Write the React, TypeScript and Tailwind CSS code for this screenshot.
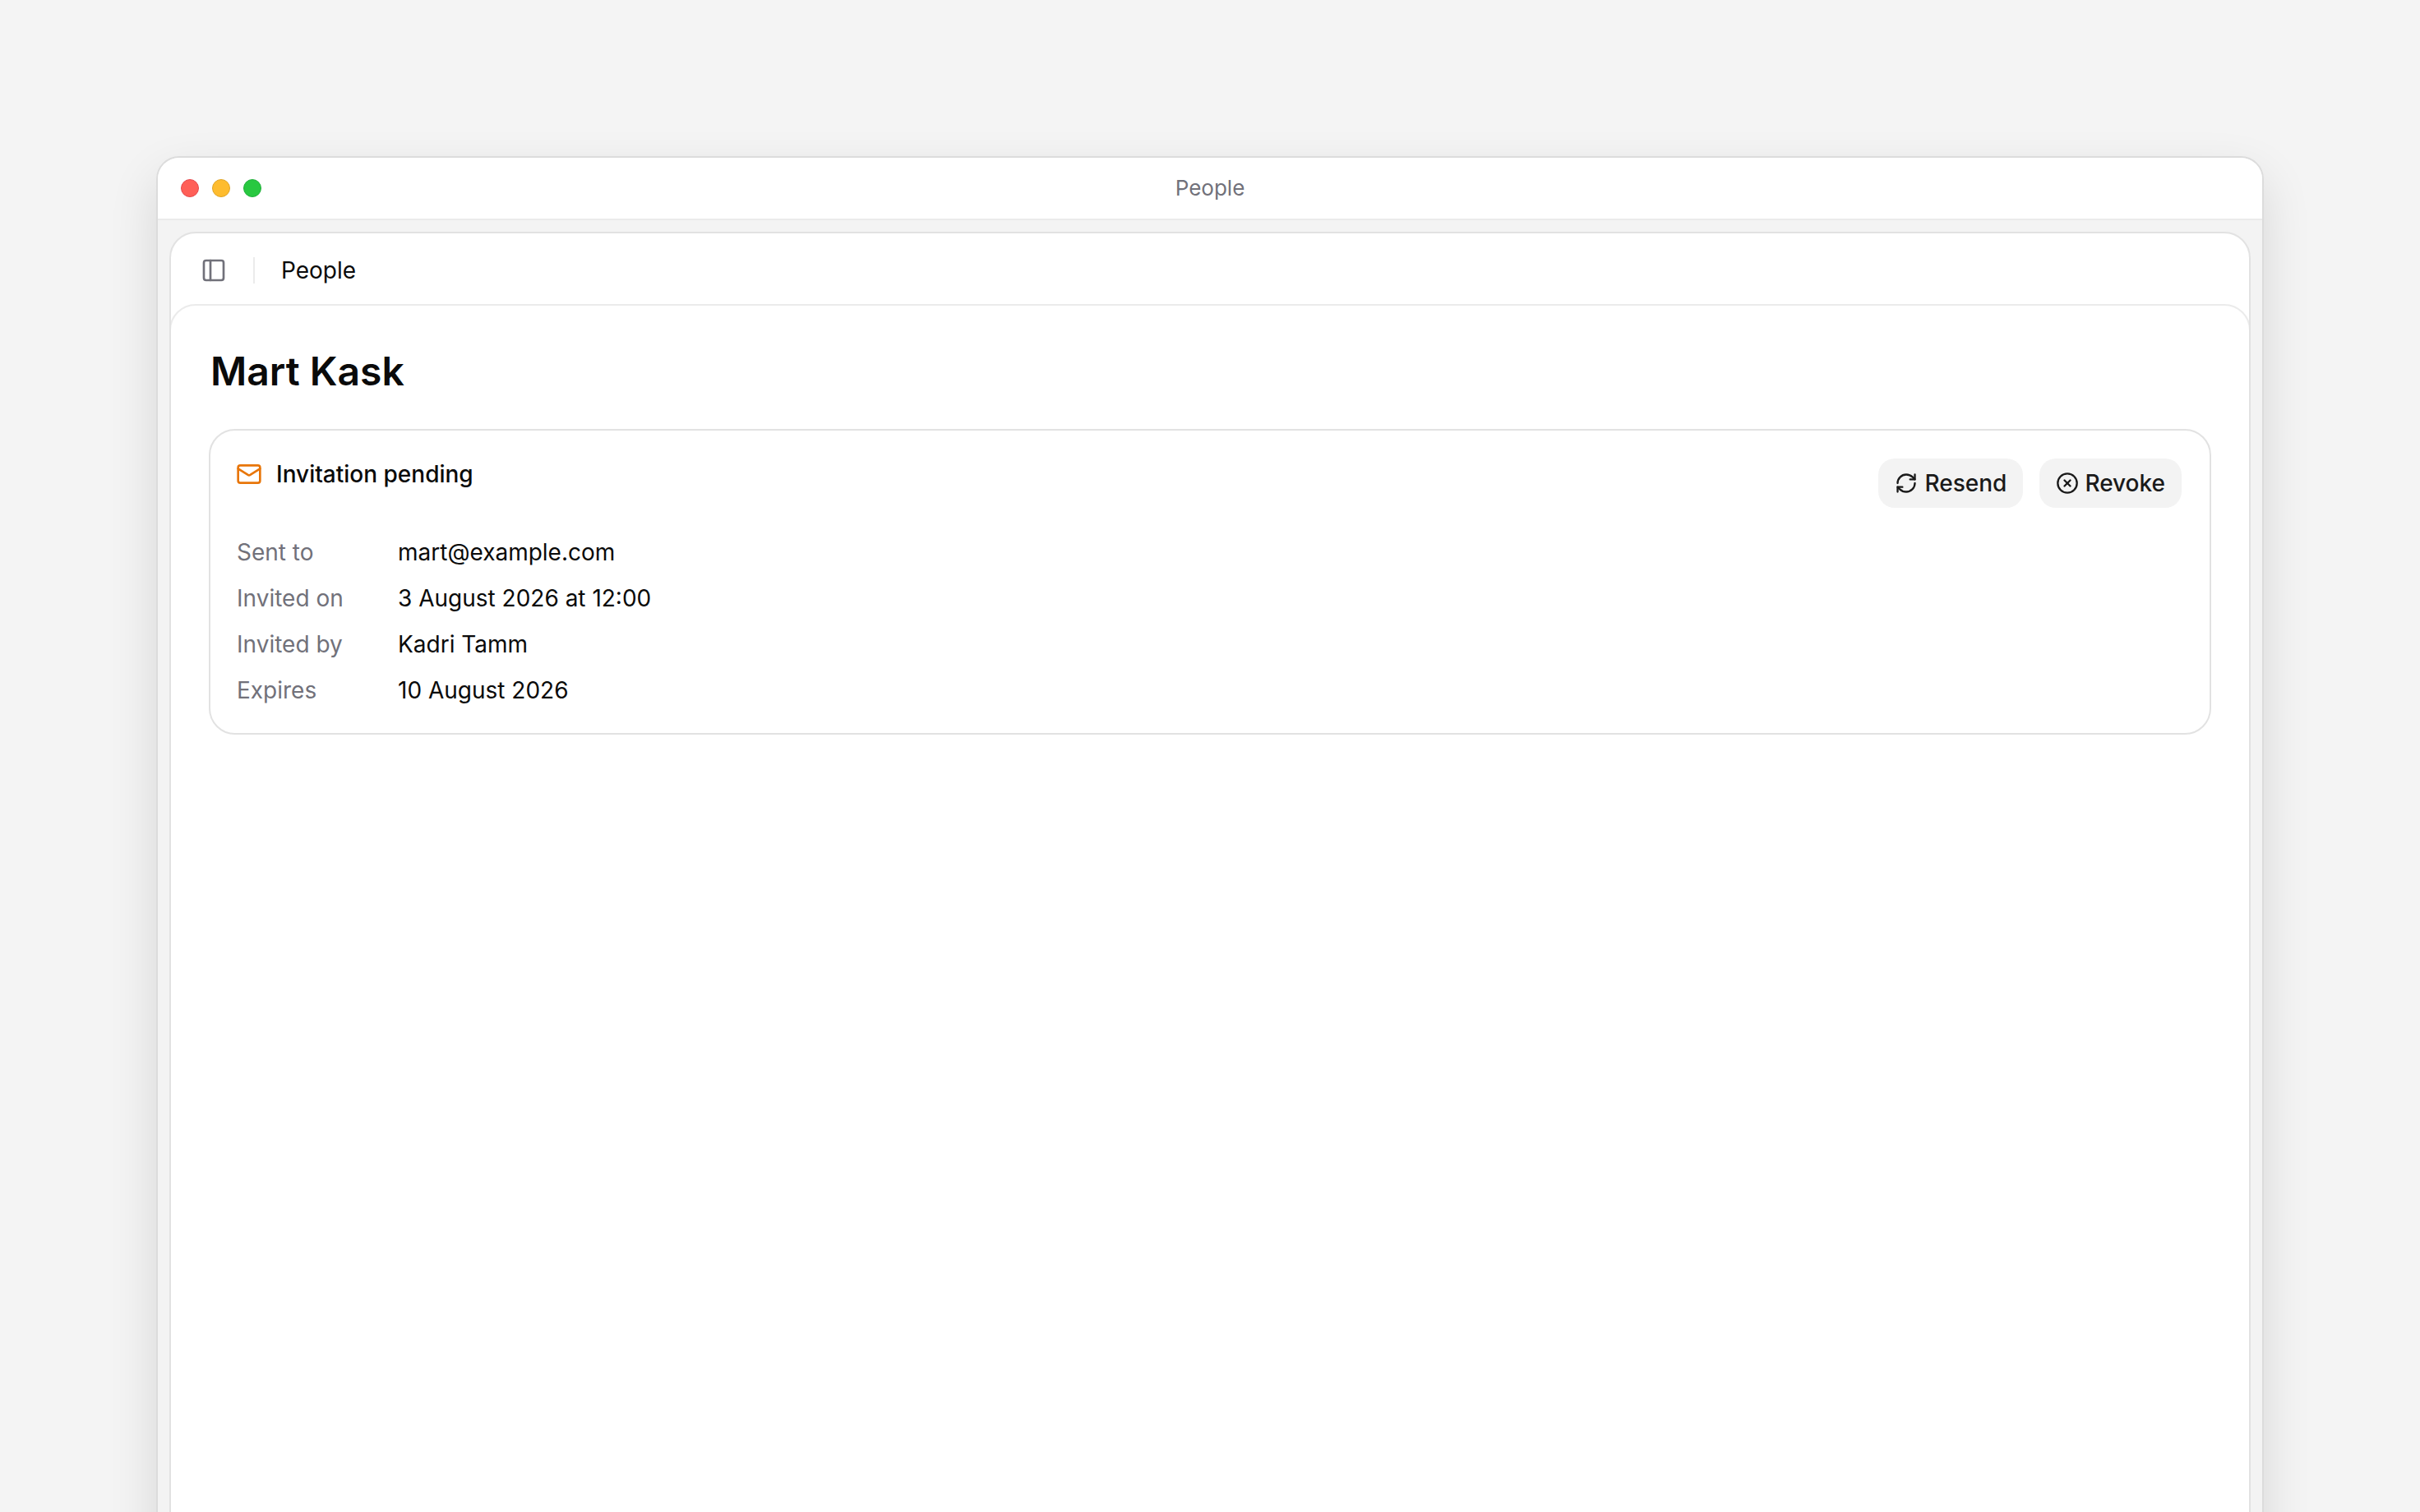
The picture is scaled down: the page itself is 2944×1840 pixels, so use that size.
import { CircleX, Mail, PanelLeft, RefreshCw } from "lucide-react";

const details = [
  { label: "Sent to", value: "mart@example.com" },
  { label: "Invited on", value: "3 August 2026 at 12:00" },
  { label: "Invited by", value: "Kadri Tamm" },
  { label: "Expires", value: "10 August 2026" },
];

export default function App() {
  return (
    <div className="h-[1840px] overflow-hidden bg-[#f4f4f4] pt-[190px] pl-[190px] pr-[190px] font-['Inter',sans-serif] text-[#0a0a0a]">
      <div className="h-[1760px] overflow-hidden rounded-[28px] border-2 border-[#dcdcdc] bg-[#f3f3f3] shadow-[0_24px_60px_rgba(0,0,0,0.12)]">
        <div className="relative flex h-[76px] items-center justify-center border-b-2 border-[#ebebeb] bg-white">
          <div className="absolute left-[28px] top-[26px] flex gap-[16px]">
            <span className="h-[22px] w-[22px] rounded-full border border-[#e5484d] bg-[#ff5f57]" />
            <span className="h-[22px] w-[22px] rounded-full border border-[#e0a526] bg-[#febc2e]" />
            <span className="h-[22px] w-[22px] rounded-full border border-[#22b03c] bg-[#28c840]" />
          </div>
          <span className="text-[26px] leading-[40px] text-[#71717a]">People</span>
        </div>
        <div className="px-[14px] pt-[14px]">
          <div className="h-[1600px] overflow-hidden rounded-[32px] border-2 border-[#e2e2e2] bg-white">
            <div className="flex h-[86px] items-center pl-[36px] pt-[4px]">
              <PanelLeft className="h-[32px] w-[32px] text-[#71717a]" strokeWidth={2} />
              <span className="ml-[32px] h-[32px] w-[2px] bg-[#ebebeb]" />
              <span className="ml-[32px] text-[28px] leading-[40px]">People</span>
            </div>
            <div className="-mx-[2px] h-[1500px] rounded-t-[32px] border-2 border-[#ebebeb] bg-white px-[46px] pt-[44px]">
              <h1 className="pl-[2px] text-[48px] font-semibold leading-[72px]">Mart Kask</h1>
              <div className="mt-[34px] rounded-[32px] border-2 border-[#e2e2e2] pb-[32px] pl-[31px] pr-[34px] pt-[34px]">
                <div className="flex items-start justify-between">
                  <div className="-mt-[1px] flex items-center gap-[17px]">
                    <Mail className="h-[32px] w-[32px] text-[#e8760a]" strokeWidth={2} />
                    <span className="text-[28px] font-medium leading-[40px]">Invitation pending</span>
                  </div>
                  <div className="flex gap-[20px]">
                    <button className="flex h-[60px] items-center gap-[8px] rounded-[20px] bg-[#f3f3f3] px-[20px] text-[28px] font-medium text-[#1a1a1a]">
                      <RefreshCw className="h-[28px] w-[28px]" strokeWidth={2} />
                      Resend
                    </button>
                    <button className="flex h-[60px] items-center gap-[7px] rounded-[20px] bg-[#f3f3f3] px-[20px] text-[28px] font-medium text-[#1a1a1a]">
                      <CircleX className="h-[28px] w-[28px]" strokeWidth={2} />
                      Revoke
                    </button>
                  </div>
                </div>
                <div className="mt-[34px] flex flex-col gap-[16px]">
                  {details.map((row) => (
                    <div key={row.label} className="flex text-[28px] leading-[40px]">
                      <span className="w-[197px] pl-[1px] text-[#71717a]">{row.label}</span>
                      <span>{row.value}</span>
                    </div>
                  ))}
                </div>
              </div>
            </div>
          </div>
        </div>
      </div>
    </div>
  );
}
